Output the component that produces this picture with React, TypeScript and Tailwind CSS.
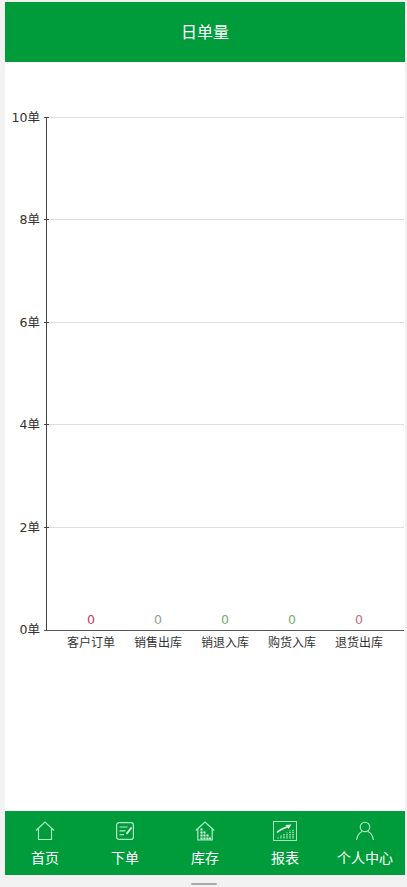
const FONT = '"DejaVu Sans", "Noto Sans CJK SC", sans-serif';

const grid = [
  { y: 117.5, label: "10单" },
  { y: 219.5, label: "8单" },
  { y: 322.5, label: "6单" },
  { y: 424.5, label: "4单" },
  { y: 527.5, label: "2单" },
];

const bars = [
  { x: 91, name: "客户订单", color: "#c23d63" },
  { x: 158, name: "销售出库", color: "#999999" },
  { x: 225, name: "销退入库", color: "#70ad70" },
  { x: 292, name: "购货入库", color: "#70ad70" },
  { x: 359, name: "退货出库", color: "#b5708a" },
];

function Chart() {
  return (
    <svg width="400" height="749" viewBox="5 62 400 749" className="block" style={{ fontFamily: FONT }}>
      {grid.map((g) => (
        <g key={g.y}>
          <line x1="49" x2="404" y1={g.y} y2={g.y} stroke="#dddddd" />
          <line x1="44" x2="49" y1={g.y} y2={g.y} stroke="#444444" />
          <text x="40" y={g.y + 4.5} textAnchor="end" fontSize="12.5" fill="#333333">{g.label}</text>
        </g>
      ))}
      <line x1="46.5" x2="46.5" y1="117" y2="630" stroke="#444444" />
      <line x1="44" x2="404" y1="630.5" y2="630.5" stroke="#555555" />
      <text x="40" y="633.5" textAnchor="end" fontSize="12.5" fill="#333333">0单</text>
      {bars.map((b) => (
        <g key={b.name}>
          <text x={b.x} y="624" textAnchor="middle" fontSize="12.5" fill={b.color}>0</text>
          <text x={b.x} y="647" textAnchor="middle" fontSize="12" fill="#333333">{b.name}</text>
        </g>
      ))}
    </svg>
  );
}

const S = "#b4ecc6";

function HomeIcon() {
  return (
    <svg width="20" height="20" viewBox="0 0 20 20" fill="none" stroke={S} strokeWidth="1.1">
      <path d="M1 9.5 10 1l9 8.5" />
      <path d="M3.5 7.5v11h13v-11" />
    </svg>
  );
}
function OrderIcon() {
  return (
    <svg width="20" height="20" viewBox="0 0 20 20" fill="none" stroke={S} strokeWidth="1.2">
      <rect x="1.6" y="1.6" width="16.8" height="16.8" rx="2.5" />
      <path d="M4.5 6h8M4.5 9.8h6M4.5 13.6h4.5" />
      <path d="M11.5 13 16.5 6.5" strokeWidth="1.9" stroke="#dff8e7" />
    </svg>
  );
}
function StockIcon() {
  return (
    <svg width="20" height="20" viewBox="0 0 20 20" fill="none" stroke={S} strokeWidth="1.2">
      <path d="M.8 9.5 10 1l9.2 8.5" />
      <path d="M2.8 8v11h14.4V8" />
      <g fill="#eafff0" stroke="none">
        <rect x="5.5" y="7.5" width="2" height="2" />
        <rect x="5.5" y="10.5" width="2" height="2" />
        <rect x="5.5" y="13.5" width="2" height="2" />
        <rect x="5.5" y="16.5" width="2" height="2" />
        <rect x="8.5" y="10.5" width="2" height="2" />
        <rect x="8.5" y="13.5" width="2" height="2" />
        <rect x="8.5" y="16.5" width="2" height="2" />
        <rect x="11.5" y="13.5" width="2" height="2" />
        <rect x="11.5" y="16.5" width="2" height="2" />
        <rect x="14" y="16.5" width="2" height="2" />
      </g>
    </svg>
  );
}
function ReportIcon() {
  return (
    <svg width="24" height="20" viewBox="0 0 24 20" fill="none" stroke={S} strokeWidth="0.9">
      <rect x=".5" y=".5" width="23" height="19" />
      <path d="M4 11.5C7 8.5 10 7.5 14 6" strokeWidth="1.6" stroke="#dff8e7" />
      <path d="M12.5 4 18.5 3.5 15.5 8z" fill="#dff8e7" stroke="none" />
      <path d="M5 17.5v-1M8 17.5v-3M11 17.5v-4.5M14 17.5v-6M17 17.5v-8M20 17.5v-9" strokeWidth="1.4" strokeDasharray="1.2 .6" />
    </svg>
  );
}
function UserIcon() {
  return (
    <svg width="20" height="20" viewBox="0 0 20 20" fill="none" stroke={S} strokeWidth="1.1">
      <circle cx="10" cy="6" r="4.8" />
      <path d="M1.6 19C2.2 14.5 5 11.6 7 10.6M18.4 19C17.8 14.5 15 11.6 13 10.6" />
    </svg>
  );
}

const tabs = [
  { label: "首页", icon: <HomeIcon /> },
  { label: "下单", icon: <OrderIcon /> },
  { label: "库存", icon: <StockIcon /> },
  { label: "报表", icon: <ReportIcon /> },
  { label: "个人中心", icon: <UserIcon /> },
];

export default function App() {
  return (
    <div className="w-[407px] h-[887px] bg-[#f2f2f2] flex flex-col pt-[2px] pl-[5px] pr-[2px] overflow-hidden" style={{ fontFamily: FONT }}>
      <header className="h-[60px] shrink-0 bg-[#009c3b] flex items-center justify-center text-white text-[16px] pt-[2px]">日单量</header>
      <main className="h-[749px] shrink-0 bg-white">
        <Chart />
      </main>
      <nav className="h-[64px] shrink-0 bg-[#009c3b] grid grid-cols-5">
        {tabs.map((t) => (
          <div key={t.label} className="flex flex-col items-center pt-[10px]">
            <div className="h-[20px] flex items-center justify-center">{t.icon}</div>
            <div className="mt-[7px] text-white text-[14px] leading-[20px] whitespace-nowrap">{t.label}</div>
          </div>
        ))}
      </nav>
      <div className="flex-1 flex justify-center items-end pb-[2px] -ml-[5px] -mr-[2px]">
        <div className="w-[26px] h-[2px] bg-[#aaaaaa] rounded-full" />
      </div>
    </div>
  );
}
